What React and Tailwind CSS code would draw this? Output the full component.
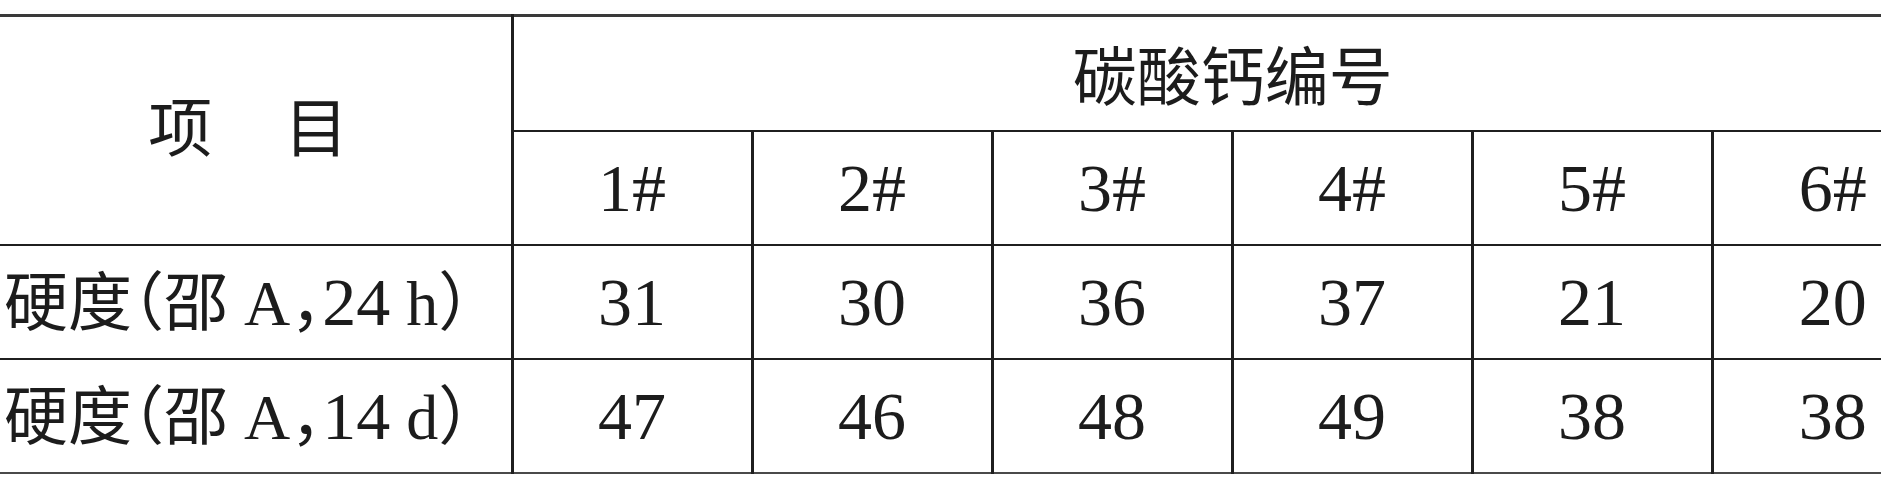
const cols = ["1#", "2#", "3#", "4#", "5#", "6#"];

const rows = [
  { label: ["硬度（邵 A，", "24", " h）"], values: ["31", "30", "36", "37", "21", "20"] },
  { label: ["硬度（邵 A，", "14", " d）"], values: ["47", "46", "48", "49", "38", "38"] },
];

const cell = "border-[#1f1f1f] border-l-[3px] border-b-2 text-center align-middle";

export default function App() {
  return (
    <div
      className="w-[1881px] h-[485px] overflow-hidden bg-white text-[#1c1c1c] pt-[14px]"
      style={{ fontFamily: '"Liberation Serif", "Noto Sans CJK SC", serif' }}
    >
      <table className="w-[1952px] table-fixed border-collapse border-t-[3px] border-[#3a3a3a]">
        <colgroup>
          <col className="w-[512px]" />
          {cols.map((c) => (
            <col key={c} className="w-[240px]" />
          ))}
        </colgroup>
        <thead>
          <tr className="h-[115px]">
            <th
              rowSpan={2}
              className="border-b-2 border-[#1f1f1f] pr-[14px] text-center align-middle font-normal text-[64px] leading-none"
            >
              项　<span className="ml-[8px]">目</span>
            </th>
            <th colSpan={6} className={`${cell} pt-[12px] font-normal text-[64px] leading-none`}>
              碳酸钙编号
            </th>
          </tr>
          <tr className="h-[114px]">
            {cols.map((c) => (
              <th key={c} className={`${cell} font-normal text-[68px] leading-none`}>
                {c}
              </th>
            ))}
          </tr>
        </thead>
        <tbody>
          {rows.map((r, i) => (
            <tr key={i} className="h-[114px]">
              <td
                className={`border-[#1f1f1f] ${i === rows.length - 1 ? "border-b-2 border-b-[#4a4a4a]" : "border-b-2"} pl-[4px] text-left align-middle whitespace-nowrap text-[64px] leading-none [font-feature-settings:'halt']`}
              >
                {r.label[0]}
                <span className="text-[68px]">{r.label[1]}</span>
                {r.label[2]}
              </td>
              {r.values.map((v, j) => (
                <td
                  key={j}
                  className={`${cell} ${i === rows.length - 1 ? "border-b-[#4a4a4a]" : ""} text-[68px] leading-none`}
                >
                  {v}
                </td>
              ))}
            </tr>
          ))}
        </tbody>
      </table>
    </div>
  );
}
